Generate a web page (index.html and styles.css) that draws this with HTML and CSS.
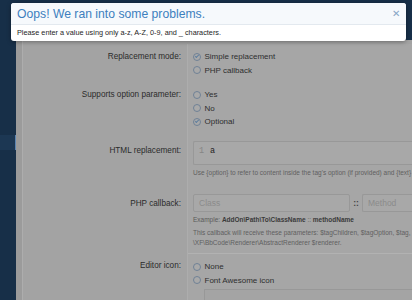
FILE: index.html
```html
<!DOCTYPE html>
<html>
<head>
<meta charset="utf-8">
<link rel="stylesheet" href="styles.css">
</head>
<body>
<div class="app">
  <aside class="sidebar">
    <div class="nav-gap"></div>
    <div class="nav-item active"></div>
  </aside>
  <div class="main">
    <header class="topbar"></header>
    <div class="content">
      <div class="gutter"></div>
      <form class="form">
        <div class="row">
          <div class="label">Replacement mode:</div>
          <div class="ctrl">
            <div class="opt"><span class="radio checked"></span>Simple replacement</div>
            <div class="opt"><span class="radio"></span>PHP callback</div>
          </div>
        </div>
        <div class="row">
          <div class="label">Supports option parameter:</div>
          <div class="ctrl">
            <div class="opt"><span class="radio"></span>Yes</div>
            <div class="opt"><span class="radio"></span>No</div>
            <div class="opt"><span class="radio checked"></span>Optional</div>
          </div>
        </div>
        <div class="row row-code">
          <div class="label label-code">HTML replacement:</div>
          <div class="ctrl">
            <div class="code"><span class="ln">1</span><span class="src">a</span></div>
            <div class="hint">Use {option} to refer to content inside the tag's option (if provided) and {text}</div>
          </div>
        </div>
        <div class="row row-cb">
          <div class="label label-cb">PHP callback:</div>
          <div class="ctrl">
            <div class="cb-inputs">
              <div class="input input-class">Class</div>
              <span class="sep">::</span>
              <div class="input input-method">Method</div>
            </div>
            <div class="hint ex">Example: <b>AddOn\Path\To\ClassName</b> :: <b>methodName</b></div>
            <div class="hint ex2">This callback will receive these parameters: $tagChildren, $tagOption, $tag,<br>\XF\BbCode\Renderer\AbstractRenderer $renderer.</div>
          </div>
        </div>
        <div class="row row-icon">
          <div class="label">Editor icon:</div>
          <div class="ctrl ctrl-sep">
            <div class="opt"><span class="radio"></span>None</div>
            <div class="opt"><span class="radio"></span>Font Awesome icon</div>
            <div class="subbox"></div>
          </div>
        </div>
      </form>
    </div>
  </div>
</div>

<div class="dialog">
  <div class="dialog-head">
    <span class="dialog-title">Oops! We ran into some problems.</span>
    <span class="dialog-close">&#x2715;</span>
  </div>
  <div class="dialog-body">Please enter a value using only a-z, A-Z, 0-9, and _ characters.</div>
</div>
</body>
</html>
```
FILE: styles.css
```css
html, body {
  margin: 0;
  padding: 0;
  height: 300px;
  overflow: hidden;
  font-family: "Liberation Sans", Arial, sans-serif;
  background: #a6a6a6;
}
.app {
  display: flex;
  height: 300px;
}
.sidebar {
  width: 16px;
  flex: none;
  background: #172f48;
  display: flex;
  flex-direction: column;
}
.nav-gap { height: 135px; }
.nav-item.active {
  height: 15px;
  background: #1c3753;
  border-right: 1.5px solid #5b84b1;
}
.main {
  flex: 1;
  display: flex;
  flex-direction: column;
  min-width: 0;
}
.topbar {
  height: 40px;
  background: #172f48;
  flex: none;
}
.content {
  flex: 1;
  display: flex;
  min-width: 0;
}
.gutter {
  width: 6px;
  flex: none;
  background: #9b9b9b;
  border-right: 1px solid #adadad;
}
.form {
  flex: 1;
  margin: 0;
  padding-top: 4px;
  background: #a3a3a3;
  min-width: 0;
  color: #2e2e2e;
  font-size: 8px;
}
.row {
  display: grid;
  grid-template-columns: 165px 1fr;
}
.label {
  text-align: right;
  padding: 6px 6px 0 0;
  line-height: 13.5px;
  font-size: 8.2px;
  border-right: 1px solid #adadad;
  color: #2b2b2b;
}
.ctrl {
  padding: 6px 0 5px 5px;
  background: #a6a6a6;
  min-width: 0;
}
.opt {
  display: flex;
  align-items: center;
  height: 13.5px;
  white-space: nowrap;
  color: #2e2e2e;
}
.radio {
  width: 6px;
  height: 6px;
  border: 0.8px solid #6f8196;
  border-radius: 50%;
  margin-right: 3.5px;
  flex: none;
  position: relative;
  background: #a9a9a9;
}
.radio.checked::after {
  content: "";
  position: absolute;
  left: 1.6px;
  top: 0.6px;
  width: 1.4px;
  height: 3px;
  border: solid #5f7f9f;
  border-width: 0 0.9px 0.9px 0;
  transform: rotate(45deg);
}
.row-code .ctrl { padding-top: 7.5px; padding-bottom: 6px; }
.label-code { padding-top: 10px; }
.code {
  height: 24px;
  border: 1px solid #989898;
  border-right: none;
  border-radius: 2px 0 0 2px;
  background: #a8a8a8;
  display: flex;
  align-items: flex-start;
  padding-top: 3px;
  box-sizing: border-box;
  font-family: "Liberation Mono", monospace;
  font-size: 8.5px;
  line-height: 12px;
}
.ln { width: 7px; margin-left: 5px; color: #858585; }
.src { margin-left: 4px; color: #1f1f1f; }
.hint {
  font-size: 6.5px;
  color: #606060;
  white-space: nowrap;
  line-height: 11px;
  margin-top: 2px;
}
.row-cb .ctrl { padding-top: 10px; padding-bottom: 6px; }
.label-cb { padding-top: 13px; }
.cb-inputs {
  display: flex;
  align-items: center;
  height: 18px;
}
.input {
  height: 18px;
  box-sizing: border-box;
  border: 1px solid #989898;
  border-radius: 2px;
  background: #a8a8a8;
  color: #8b8b8b;
  font-size: 8.5px;
  line-height: 16px;
  padding-left: 5px;
}
.input-class { width: 157px; flex: none; }
.sep { width: 12px; text-align: center; color: #444; font-size: 8.5px; font-weight: bold; flex: none; }
.input-method { flex: 1; border-right: none; border-radius: 2px 0 0 2px; }
.hint.ex { line-height: 10px; margin-top: 3px; color: #5a5a5a; }
.hint.ex b { color: #3a3a3a; }
.hint.ex2 { line-height: 9.5px; margin-top: 3px; }
.ctrl-sep { border-top: 1px solid #b2b2b2; }
.subbox {
  margin: 2px 0 0 11px;
  height: 20px;
  border: 1px solid #989898;
  border-right: none;
  background: #a4a4a4;
}

.dialog {
  position: absolute;
  left: 11px;
  top: 3px;
  width: 395px;
  background: #ffffff;
  border-radius: 3px;
  box-shadow: 0 1px 4px rgba(0,0,0,0.35);
  overflow: hidden;
}
.dialog-head {
  display: flex;
  align-items: center;
  justify-content: space-between;
  height: 21px;
  padding: 0 6px;
  background: #f6f9fc;
  border-bottom: 1px solid #e3e9ef;
}
.dialog-title {
  font-size: 12.2px;
  color: #3d7fbe;
}
.dialog-close {
  font-size: 10px;
  color: #86a6c6;
}
.dialog-body {
  padding: 0 6px;
  height: 16px;
  line-height: 16px;
  font-size: 7.3px;
  color: #1e1e1e;
}
```
